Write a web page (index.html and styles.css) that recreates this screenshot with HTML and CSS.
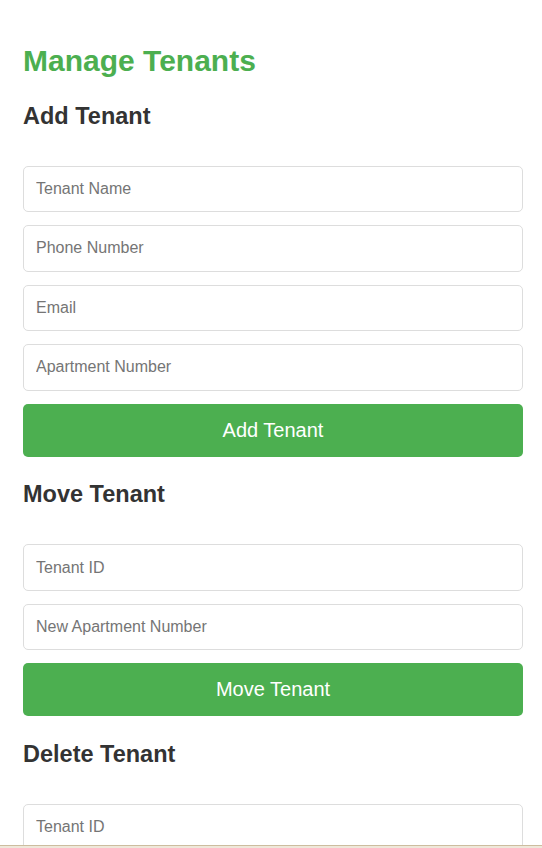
FILE: index.html
```html
<!DOCTYPE html>
<html lang="en">
<head>
<meta charset="utf-8">
<title>Manage Tenants</title>
<link rel="stylesheet" href="styles.css">
</head>
<body>
<div class="container">
  <h1 class="title">Manage Tenants</h1>

  <h2 class="section-title">Add Tenant</h2>
  <form class="form">
    <input class="field" type="text" placeholder="Tenant Name">
    <input class="field" type="text" placeholder="Phone Number">
    <input class="field" type="text" placeholder="Email">
    <input class="field" type="text" placeholder="Apartment Number">
    <button class="btn" type="button">Add Tenant</button>
  </form>

  <h2 class="section-title">Move Tenant</h2>
  <form class="form">
    <input class="field" type="text" placeholder="Tenant ID">
    <input class="field" type="text" placeholder="New Apartment Number">
    <button class="btn" type="button">Move Tenant</button>
  </form>

  <h2 class="section-title">Delete Tenant</h2>
  <form class="form">
    <input class="field" type="text" placeholder="Tenant ID">
    <button class="btn" type="button">Delete Tenant</button>
  </form>
</div>
<div class="bottom-edge"></div>
</body>
</html>
```

FILE: styles.css
```css
html, body {
  margin: 0;
  padding: 0;
  background: #ffffff;
}

body {
  font-family: "Liberation Sans", Arial, sans-serif;
  color: #333333;
  overflow: hidden;
}

.container {
  padding: 44px 19px 0 23px;
}

.title {
  margin: 0;
  font-size: 30px;
  font-weight: bold;
  color: #4caf50;
  line-height: normal;
}

.section-title {
  margin: 24.5px 0 36.2px;
  font-size: 23.5px;
  font-weight: bold;
  color: #333333;
  line-height: normal;
}

.form {
  display: flex;
  flex-direction: column;
  gap: 13px;
  margin: 0;
}

.field {
  box-sizing: border-box;
  width: 100%;
  height: 46.5px;
  margin: 0;
  padding: 0 12px;
  border: 1px solid #dddddd;
  border-radius: 5px;
  font-family: "Liberation Sans", Arial, sans-serif;
  font-size: 16px;
  color: #333333;
  background: #ffffff;
}

.field::placeholder {
  color: #757575;
}

.btn {
  box-sizing: border-box;
  width: 100%;
  height: 53px;
  margin: 0;
  border: none;
  border-radius: 5px;
  background: #4caf50;
  color: #ffffff;
  font-family: "Liberation Sans", Arial, sans-serif;
  font-size: 20px;
  cursor: pointer;
}

.bottom-edge {
  position: fixed;
  left: 0;
  right: 0;
  bottom: 0;
  height: 2px;
  border-top: 1px solid #cdbd9f;
  background: #efe8da;
}
```
